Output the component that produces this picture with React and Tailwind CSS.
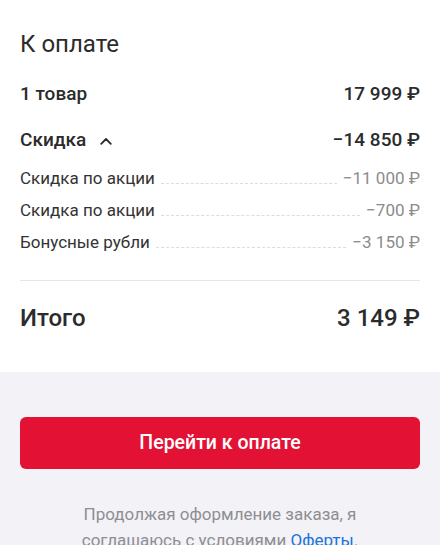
import React from 'react';

const font = { fontFamily: 'Roboto, "Noto Sans", sans-serif' };

const discounts = [
  { label: 'Скидка по акции', value: '−11 000 ₽' },
  { label: 'Скидка по акции', value: '−700 ₽' },
  { label: 'Бонусные рубли', value: '−3 150 ₽' },
];

const ChevronUp = () => (
  <svg width="12" height="8" viewBox="0 0 12 8" fill="none" className="ml-[14px] mt-[2px]">
    <path d="M1.2 6.8 L6 2 L10.8 6.8" stroke="#2b2b2b" strokeWidth="1.8" strokeLinecap="round" strokeLinejoin="round" />
  </svg>
);

const DiscountRow = ({ label, value }) => (
  <div className="flex items-center h-6 text-[17px]">
    <span className="text-[#333333] whitespace-nowrap">{label}</span>
    <div className="flex-1 self-end mb-[7px] mx-[6px] border-b border-dashed border-[#dcdcdc]" />
    <span className="text-[#8c8c8c] whitespace-nowrap">{value}</span>
  </div>
);

export default function App() {
  return (
    <div className="w-[440px] h-[545px] overflow-hidden bg-[#f3f3f7]" style={font}>
      <section className="bg-white px-5 pt-[28px] pb-[38px]">
        <h1 className="text-[24px] leading-8 text-[#2b2b2b]">К оплате</h1>

        <div className="mt-[22px] flex items-center justify-between h-6 text-[19px] font-medium text-[#2b2b2b]">
          <span>1 товар</span>
          <span>17 999 ₽</span>
        </div>

        <div className="mt-[22px] flex items-center justify-between h-6 text-[19px] font-medium text-[#2b2b2b]">
          <span className="flex items-center">
            Скидка
            <ChevronUp />
          </span>
          <span>−14 850 ₽</span>
        </div>

        <div className="mt-[15px] flex flex-col gap-2">
          {discounts.map((d, i) => (
            <DiscountRow key={i} label={d.label} value={d.value} />
          ))}
        </div>

        <div className="mt-[25px] h-px bg-[#e6e6e6]" />

        <div className="mt-[21px] flex items-center justify-between h-8 text-[24px] font-medium text-[#2b2b2b]">
          <span>Итого</span>
          <span>3 149 ₽</span>
        </div>
      </section>

      <section className="px-5 pt-[45px]">
        <button className="w-full h-[52px] rounded-[6px] bg-[#e31235] text-white text-[19.5px] font-medium">
          Перейти к оплате
        </button>
        <p className="mt-[32px] px-6 text-center text-[17px] leading-[26px] text-[#8e8e93]">
          Продолжая оформление заказа, я соглашаюсь с условиями{' '}
          <span className="text-[#1a73d9]">Оферты</span>.
        </p>
      </section>
    </div>
  );
}
